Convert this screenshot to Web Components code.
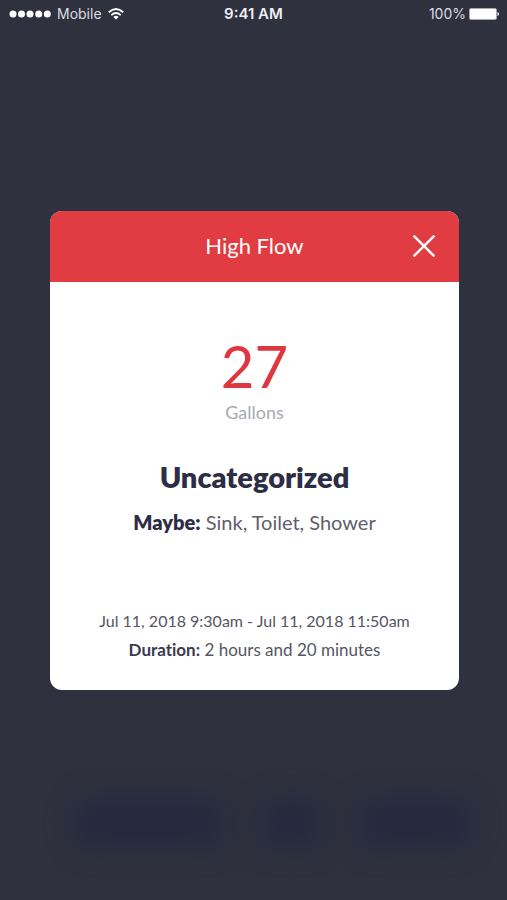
<!DOCTYPE html>
<html lang="en">
<head>
<meta charset="utf-8">
<meta name="viewport" content="width=device-width, initial-scale=1">
<title>High Flow</title>
<style>
  body { margin: 0; background: #2f313e; font-family: Lato, "Open Sans", sans-serif; font-variant-ligatures: none; }
</style>
</head>
<body>
<flow-screen></flow-screen>
<script>
const define = (name, html) => customElements.define(name, class extends HTMLElement {
  constructor() {
    super();
    this.attachShadow({ mode: 'open' }).innerHTML = html;
  }
});

define('status-bar', `
<style>
  :host { display: grid; grid-template-columns: 1fr auto 1fr; align-items: center; height: 28px; padding: 0 8px; color: #dcdde3; font: 14px/20px Inter, "Liberation Sans", sans-serif; }
  .side { display: flex; align-items: center; gap: 6px; }
  .end { justify-content: flex-end; gap: 3px; }
  .time { font-size: 15px; font-weight: 600; color: #eeeef2; }
  svg { display: block; }
</style>
<div class="side">
  <svg width="43" height="10" viewBox="0 0 43 10" fill="#fff" aria-hidden="true"><circle cx="5" cy="5" r="3.5"/><circle cx="13.5" cy="5" r="3.5"/><circle cx="22" cy="5" r="3.5"/><circle cx="30.7" cy="5" r="3.5"/><circle cx="39.3" cy="5" r="3.5"/></svg>
  <span><slot name="carrier"></slot></span>
  <svg width="16" height="12" viewBox="0 0 16 12" fill="none" stroke="#fff" stroke-width="1.9" aria-hidden="true"><path d="M.7 4.300Q8-2.300 15.300 4.300M3.200 7.100Q8 2.900 12.800 7.100"/><path d="M8 11.600 5.300 8.900Q8 6.700 10.700 8.900Z" fill="#fff" stroke="none"/></svg>
</div>
<span class="time"><slot name="time"></slot></span>
<div class="side end">
  <span><slot name="battery"></slot></span>
  <svg width="30" height="14" viewBox="0 0 30 14" aria-hidden="true"><rect x=".5" y="1.5" width="27" height="11" rx="1.5" fill="#fff" stroke="#a5a6ae"/><path d="M28.500 5q1.500.4 1.500 2t-1.500 2Z" fill="#fff"/></svg>
</div>`);

define('blurred-nav', `
<style>
  :host { display: grid; grid-template-columns: 154fr 62fr 116fr; gap: 34px; padding: 0 34px 50px 72px; }
  i { display: block; height: 54px; border-radius: 20px; background: #252a3f; filter: blur(12px); }
</style><i></i><i></i><i></i>`);

define('close-button', `
<style>
  :host { display: block; }
  button { display: grid; place-items: center; width: 32px; height: 32px; padding: 0; border: 0; background: none; color: #fff; cursor: pointer; }
</style>
<button type="button" aria-label="Close"><svg width="24" height="24" viewBox="0 0 24 24" fill="none" stroke="currentColor" stroke-width="2.4" stroke-linecap="round" aria-hidden="true"><path d="M2.300 2.300 21.700 21.700M21.700 2.300 2.300 21.700"/></svg></button>`);

define('modal-card', `
<style>
  :host { display: block; width: 100%; overflow: hidden; border-radius: 12px; background: #fff; }
  header { display: grid; grid-template-columns: 32px 1fr 32px; align-items: center; height: 71px; padding: 0 19px; background: #e03c42; color: #fff; }
  h1 { grid-column: 2; margin: 0; text-align: center; font-size: 22px; line-height: 28px; font-weight: 400; }
  .body { padding: 48px 16px 26px; text-align: center; }
</style>
<header><h1><slot name="title"></slot></h1><close-button></close-button></header>
<div class="body"><slot></slot></div>`);

define('usage-value', `
<style>
  :host { display: block; }
  .number { font-size: 58px; line-height: 72px; color: #de373f; }
  .unit { font-size: 18px; line-height: 20px; color: #a9aab2; }
</style>
<div class="number"><slot></slot></div><div class="unit"><slot name="unit"></slot></div>`);

define('event-category', `
<style>
  :host { display: block; margin-top: 38px; color: #5f606b; }
  h2 { margin: 0 0 16px; font-size: 29px; line-height: 34px; font-weight: 800; color: #2d2e45; }
  p { margin: 0; font-size: 20px; line-height: 24px; }
  b { font-weight: 800; color: #2d2e45; }
</style>
<h2><slot></slot></h2><p><b>Maybe:</b> <slot name="guesses"></slot></p>`);

define('event-time', `
<style>
  :host { display: block; margin-top: 72px; line-height: 29px; color: #555663; }
  p { margin: 0; }
  .range { font-size: 16px; }
  .duration { font-size: 17px; }
  b { color: #3a3b50; }
</style>
<p class="range"><slot></slot></p><p class="duration"><b>Duration:</b> <slot name="duration"></slot></p>`);

define('flow-screen', `
<style>
  :host { display: flex; flex-direction: column; justify-content: space-between; min-height: 100vh; }
  .overlay { position: absolute; inset: 0; display: flex; align-items: center; padding: 0 48px 0 50px; }
</style>
<status-bar><span slot="carrier">Mobile</span><span slot="time">9:41 AM</span><span slot="battery">100%</span></status-bar>
<blurred-nav aria-hidden="true"></blurred-nav>
<div class="overlay">
  <modal-card role="dialog" aria-label="High Flow">
    <span slot="title">High Flow</span>
    <usage-value>27<span slot="unit">Gallons</span></usage-value>
    <event-category>Uncategorized<span slot="guesses">Sink, Toilet, Shower</span></event-category>
    <event-time>Jul 11, 2018 9:30am - Jul 11, 2018 11:50am<span slot="duration">2 hours and 20 minutes</span></event-time>
  </modal-card>
</div>`);
</script>
</body>
</html>
